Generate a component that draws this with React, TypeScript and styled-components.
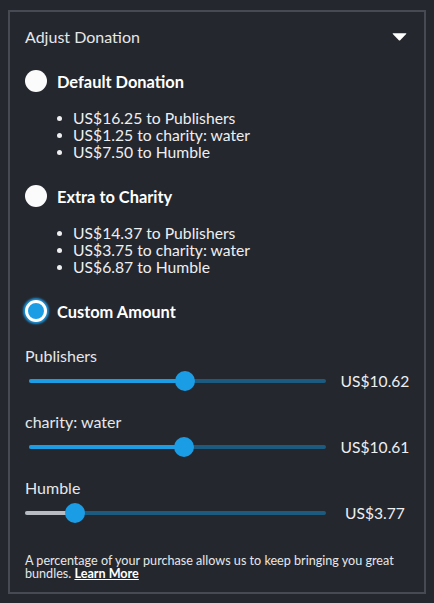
import React from 'react';
import styled, { createGlobalStyle } from 'styled-components';

const GlobalStyle = createGlobalStyle`
    html, body {
        margin: 0;
        padding: 0;
        background: #25272e;
    }
    body {
        font-family: Lato, 'Noto Sans', sans-serif;
        color: #e4e5e8;
    }
`;

interface Split {
    amount: string;
    target: string;
}

const defaultSplit: Split[] = [
    { amount: 'US$16.25', target: 'Publishers' },
    { amount: 'US$1.25', target: 'charity: water' },
    { amount: 'US$7.50', target: 'Humble' },
];

const charitySplit: Split[] = [
    { amount: 'US$14.37', target: 'Publishers' },
    { amount: 'US$3.75', target: 'charity: water' },
    { amount: 'US$6.87', target: 'Humble' },
];

const sliders = [
    { label: 'Publishers', value: 'US$10.62', percent: 52.5, muted: false, inset: 4 },
    { label: 'charity: water', value: 'US$10.61', percent: 52.2, muted: false, inset: 4 },
    { label: 'Humble', value: 'US$3.77', percent: 16.6, muted: true, inset: 0 },
];

const Chevron = () => (
    <svg width="15" height="9" viewBox="0 0 15 9">
        <path d="M1 1.2 L14 1.2 Q14.6 1.4 14.2 2 L8.2 8.2 Q7.5 8.8 6.8 8.2 L0.8 2 Q0.4 1.4 1 1.2 Z" fill="#ffffff" />
    </svg>
);

const Option: React.FC<{ title: string; checked?: boolean; items?: Split[] }> = ({ title, checked = false, items }) => (
    <OptionBlock>
        <RadioRow>
            <Radio checked={checked} />
            <OptionTitle>{title}</OptionTitle>
        </RadioRow>
        {items && (
            <SplitList>
                {items.map((item) => (
                    <SplitItem key={item.target}>
                        {item.amount} to {item.target}
                    </SplitItem>
                ))}
            </SplitList>
        )}
    </OptionBlock>
);

export default function App() {
    return (
        <Page>
            <GlobalStyle />
            <Panel>
                <Header>
                    <Title>Adjust Donation</Title>
                    <Chevron />
                </Header>
                <Option title="Default Donation" items={defaultSplit} />
                <Option title="Extra to Charity" items={charitySplit} />
                <Option title="Custom Amount" checked />
                <SliderGroup>
                    {sliders.map((s) => (
                        <SliderBlock key={s.label}>
                            <SliderLabel>{s.label}</SliderLabel>
                            <SliderRow>
                                <Track inset={s.inset}>
                                    <Fill muted={s.muted} style={{ width: `${s.percent}%` }} />
                                    <Knob style={{ left: `${s.percent}%` }} />
                                </Track>
                                <SliderValue>{s.value}</SliderValue>
                            </SliderRow>
                        </SliderBlock>
                    ))}
                </SliderGroup>
                <Footnote>
                    A percentage of your purchase allows us to keep bringing you great bundles.{' '}
                    <LearnMore href="#">Learn More</LearnMore>
                </Footnote>
            </Panel>
        </Page>
    );
}

const Page = styled.div`
    padding: 10px 8px 9px 8px;
`;
const Panel = styled.div`
    border: 2px solid #474a53;
    padding: 15px 9px 12px 15px;
    display: flex;
    flex-direction: column;
`;
const Header = styled.div`
    display: flex;
    align-items: center;
    justify-content: space-between;
    height: 20px;
    & > svg {
        margin-right: 8px;
        margin-top: -1px;
    }
`;
const Title = styled.div`
    font-size: 16px;
    line-height: 20px;
    color: #e6e7ea;
`;
const OptionBlock = styled.div`
    display: flex;
    flex-direction: column;
    margin-top: 23px;
    &:nth-of-type(n + 3) {
        margin-top: 24px;
    }
`;
const RadioRow = styled.div`
    display: flex;
    align-items: center;
    gap: 10px;
    height: 22px;
`;
const Radio = styled.div<{ checked: boolean }>`
    width: 22px;
    height: 22px;
    border-radius: 50%;
    box-sizing: border-box;
    background: ${({ checked }) => (checked ? '#1b9de6' : '#fbfbfc')};
    border: ${({ checked }) => (checked ? '3px solid #ffffff' : 'none')};
    box-shadow: ${({ checked }) => (checked ? '0 0 2px 2px #1b8fd4' : 'none')};
`;
const OptionTitle = styled.div`
    font-size: 16.4px;
    font-weight: 700;
    color: #ffffff;
`;
const SplitList = styled.ul`
    list-style: none;
    margin: 18px 0 0 0;
    padding: 0 0 0 48px;
`;
const SplitItem = styled.li`
    position: relative;
    font-size: 15.7px;
    line-height: 17px;
    color: #eeeff1;
    &::before {
        content: '';
        position: absolute;
        left: -16px;
        top: 6px;
        width: 5px;
        height: 5px;
        border-radius: 50%;
        background: #eeeff1;
    }
`;
const SliderGroup = styled.div`
    display: flex;
    flex-direction: column;
    gap: 20px;
    margin-top: 24px;
`;
const SliderBlock = styled.div`
    display: flex;
    flex-direction: column;
    gap: 4px;
`;
const SliderLabel = styled.div`
    font-size: 16px;
    line-height: 20px;
    color: #e6e7ea;
`;
const SliderRow = styled.div`
    display: flex;
    align-items: center;
    height: 22px;
`;
const Track = styled.div<{ inset: number }>`
    position: relative;
    flex: 1;
    height: 4px;
    border-radius: 2px;
    margin-left: ${({ inset }) => inset}px;
    margin-right: 9px;
    background: #1c5b7f;
`;
const Fill = styled.div<{ muted: boolean }>`
    height: 100%;
    border-radius: 2px;
    background: ${({ muted }) => (muted ? '#b8bbc2' : '#1e9ce3')};
`;
const Knob = styled.div`
    position: absolute;
    top: 50%;
    width: 20px;
    height: 20px;
    border-radius: 50%;
    background: #1b9de6;
    transform: translate(-50%, -50%);
`;
const SliderValue = styled.div`
    width: 80px;
    text-align: center;
    font-size: 15.6px;
    color: #eeeff1;
`;
const Footnote = styled.p`
    margin: 30px 0 0 0;
    font-size: 12.6px;
    line-height: 13px;
    color: #e6e7ea;
`;
const LearnMore = styled.a`
    color: #ffffff;
    font-weight: 700;
    text-decoration: underline;
`;
